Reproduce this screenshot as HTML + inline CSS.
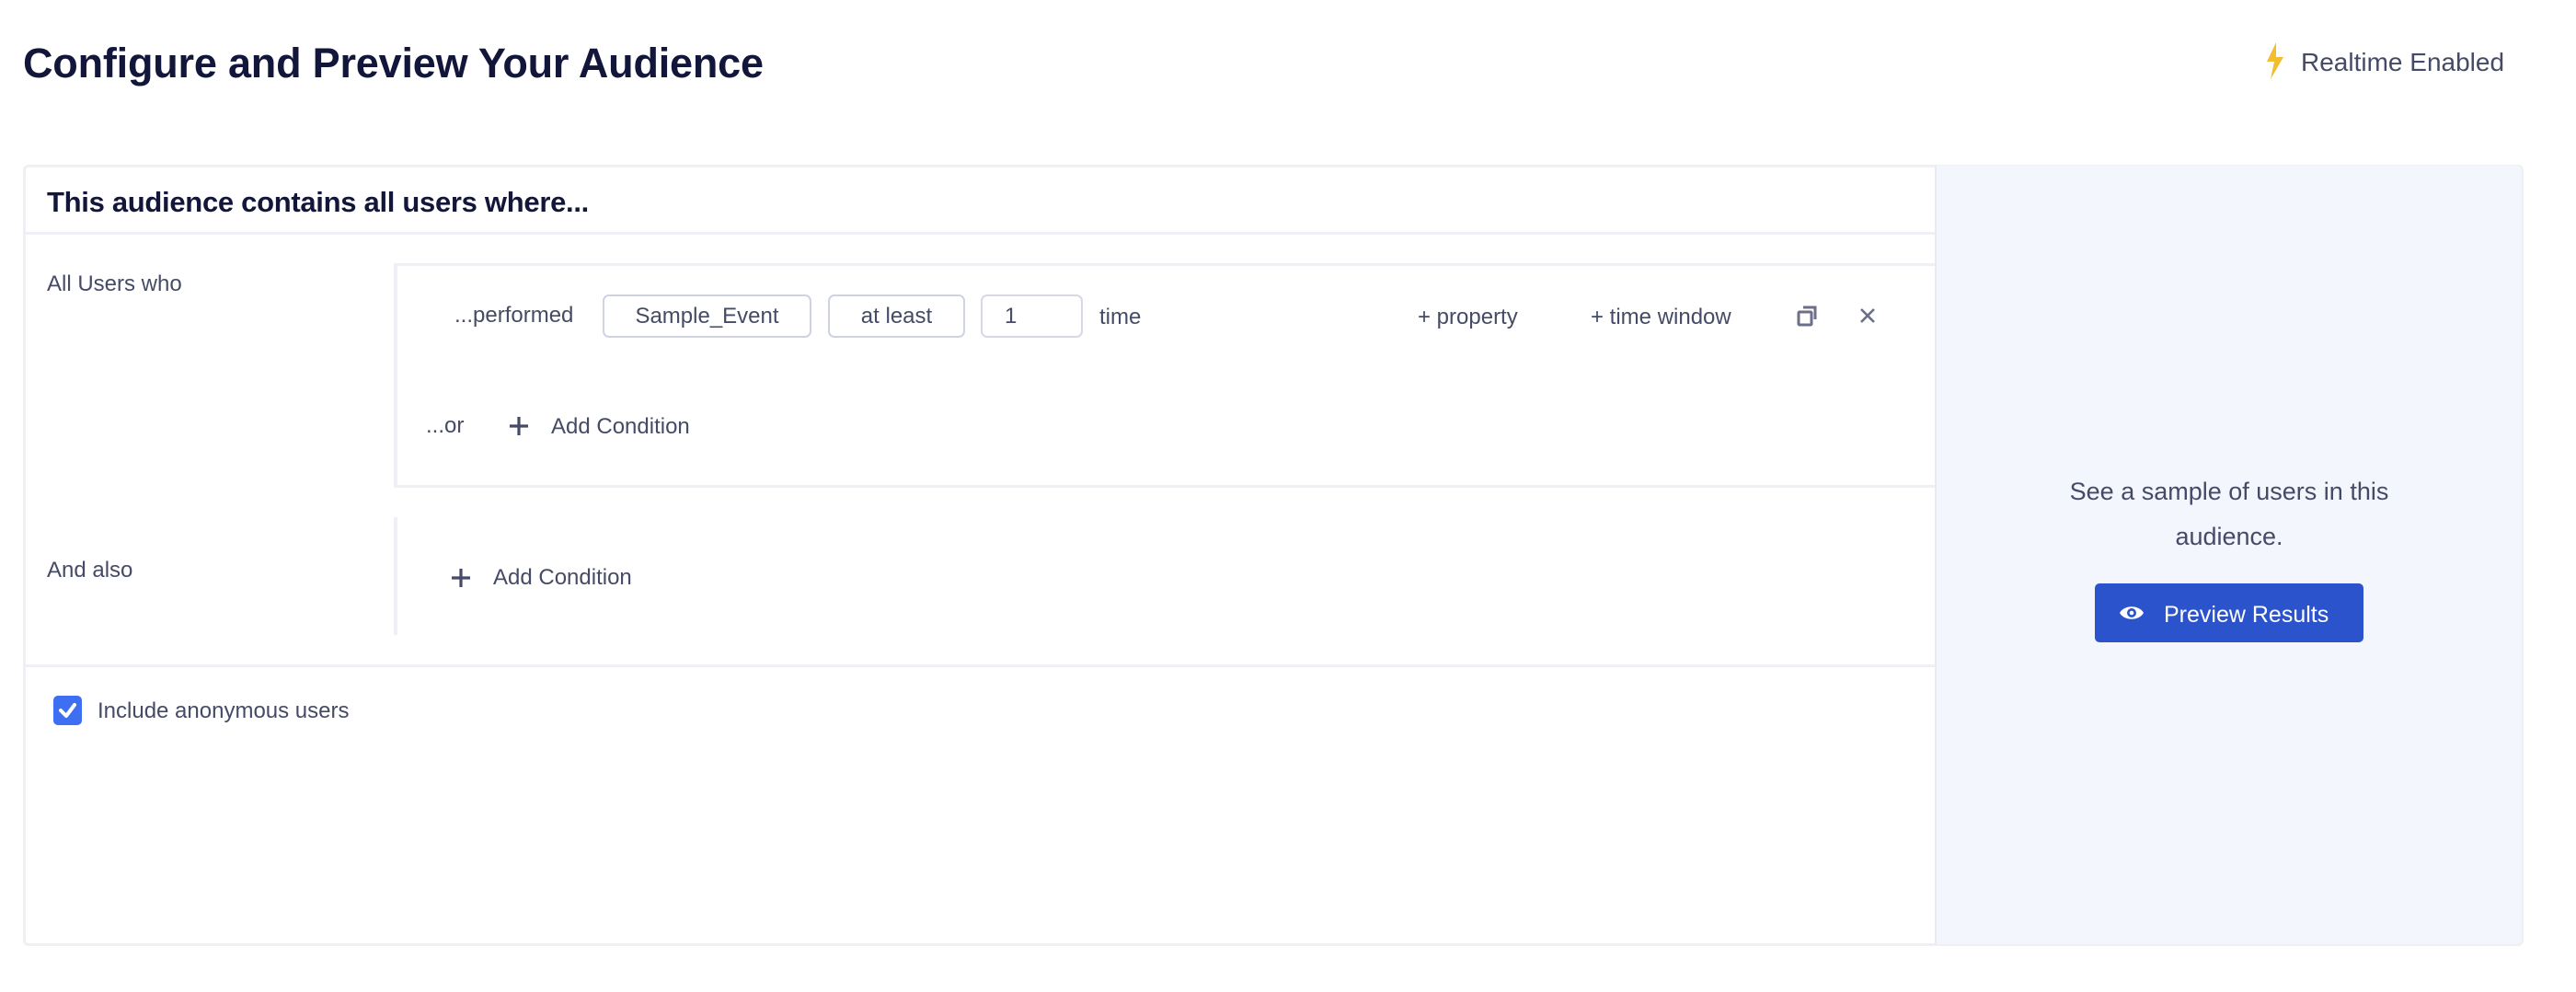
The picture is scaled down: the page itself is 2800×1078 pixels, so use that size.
<!DOCTYPE html>
<html><head><meta charset="utf-8"><style>
*{box-sizing:border-box;margin:0;padding:0}
body{width:2800px;height:1078px;background:#fff;font-family:"Liberation Sans",sans-serif;color:#454b66;position:relative;overflow:hidden}
.a{position:absolute;white-space:nowrap}
.t{font-size:24px;line-height:1}
.box{position:absolute;border:2px solid #cfd3e0;border-radius:7px;font-size:24px;display:flex;align-items:center;justify-content:center;color:#454b66}
</style></head><body>
<div class="a" style="left:25px;top:43px;font-size:45px;font-weight:bold;color:#12163a;letter-spacing:-0.2px">Configure and Preview Your Audience</div>
<svg class="a" style="left:2462px;top:46px" width="22" height="40" viewBox="0 0 22 40"><path d="M12 0 L2 21 L10 21 L6 40 L20 16 L12 16 Z" fill="#f0be2e"/></svg>
<div class="a" style="left:2501px;top:52px;font-size:28px;color:#454b66">Realtime Enabled</div>

<div class="a" style="left:25px;top:179px;width:2718px;height:849px;border:3px solid #eef0f5;border-radius:6px"></div>
<div class="a" style="left:2103px;top:180px;width:638px;height:846px;background:#f4f6fd;border-left:2px solid #e8ebf5;border-radius:0 6px 6px 0"></div>
<div class="a" style="left:28px;top:252px;width:2075px;height:3px;background:#eef0f5"></div>
<div class="a" style="left:51px;top:202px;font-size:31px;font-weight:bold;color:#12163a;letter-spacing:-0.3px">This audience contains all users where...</div>

<div class="a t" style="left:51px;top:297px">All Users who</div>
<div class="a" style="left:428px;top:286px;width:1675px;height:244px;border-top:3px solid #eef0f5;border-bottom:3px solid #eef0f5;border-left:4px solid #eef0f5"></div>
<div class="a t" style="left:494px;top:331px">...performed</div>
<div class="box" style="left:655px;top:320px;width:227px;height:47px">Sample_Event</div>
<div class="box" style="left:900px;top:320px;width:149px;height:47px">at least</div>
<div class="box" style="left:1066px;top:320px;width:111px;height:47px;justify-content:flex-start;padding-left:24px;border-color:#d6d9e3">1</div>
<div class="a t" style="left:1195px;top:333px">time</div>
<div class="a t" style="left:1541px;top:333px">+ property</div>
<div class="a t" style="left:1729px;top:333px">+ time window</div>
<svg class="a" style="left:1952px;top:330px" width="26" height="26" viewBox="0 0 26 26" fill="none" stroke="#6b7088" stroke-width="3"><rect x="3" y="9" width="14" height="14" rx="1"/><path d="M8 4 H21 V17"/></svg>
<svg class="a" style="left:2021px;top:334px" width="18" height="18" viewBox="0 0 18 18" stroke="#6b7088" stroke-width="2.6"><path d="M2 2 L16 16 M16 2 L2 16"/></svg>
<div class="a t" style="left:463px;top:451px">...or</div>
<svg class="a" style="left:553px;top:452px" width="22" height="22" viewBox="0 0 22 22" stroke="#454b66" stroke-width="3.2"><path d="M11 1 V21 M1 11 H21"/></svg>
<div class="a t" style="left:599px;top:452px">Add Condition</div>

<div class="a t" style="left:51px;top:608px">And also</div>
<div class="a" style="left:428px;top:562px;width:4px;height:128px;background:#eef0f5"></div>
<svg class="a" style="left:490px;top:617px" width="22" height="22" viewBox="0 0 22 22" stroke="#454b66" stroke-width="3.2"><path d="M11 1 V21 M1 11 H21"/></svg>
<div class="a t" style="left:536px;top:616px">Add Condition</div>

<div class="a" style="left:28px;top:722px;width:2075px;height:3px;background:#eef0f5"></div>
<div class="a" style="left:58px;top:756px;width:31px;height:32px;background:#3e6ef2;border-radius:5px"></div>
<svg class="a" style="left:58px;top:756px" width="31" height="32" viewBox="0 0 31 32" fill="none" stroke="#fff" stroke-width="4" stroke-linecap="round" stroke-linejoin="round"><path d="M8 16 L14 22 L23 10"/></svg>
<div class="a t" style="left:106px;top:761px">Include anonymous users</div>

<div class="a" style="left:2103px;top:510px;width:640px;text-align:center;font-size:27px;line-height:49px;color:#454b66">See a sample of users in this<br>audience.</div>
<div class="a" style="left:2277px;top:634px;width:292px;height:64px;background:#2b53cc;border-radius:5px"></div>
<svg class="a" style="left:2303px;top:655px" width="28" height="22" viewBox="0 0 28 22"><path d="M1 11 C6 2 22 2 27 11 C22 20 6 20 1 11 Z" fill="#fff"/><circle cx="14" cy="11" r="5" fill="#2b53cc"/><circle cx="14" cy="11" r="2.3" fill="#fff"/></svg>
<div class="a" style="left:2352px;top:654px;font-size:25px;color:#fff">Preview Results</div>
</body></html>
